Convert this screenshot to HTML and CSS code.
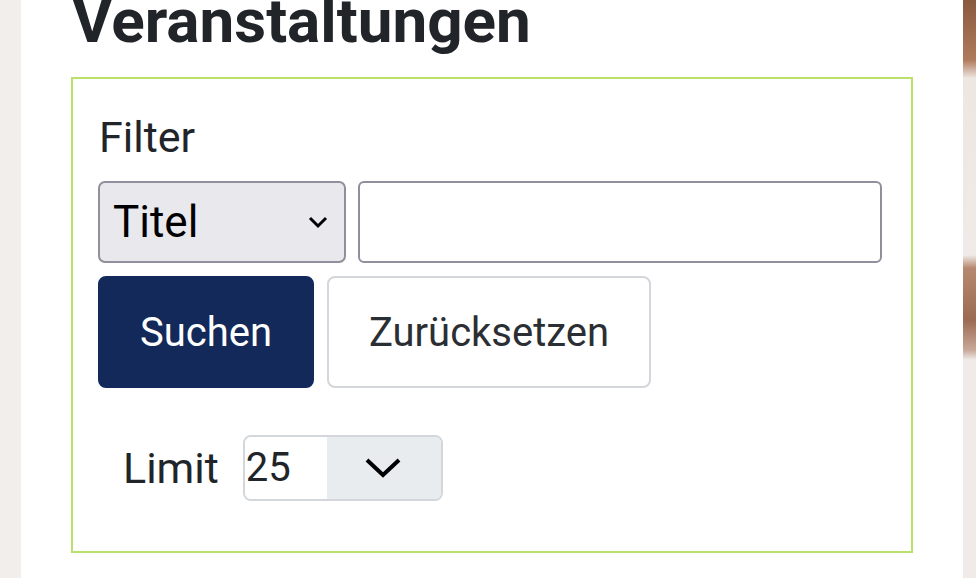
FILE: index.html
```html
<!DOCTYPE html>
<html lang="de">
<head>
  <meta charset="UTF-8">
  <title>Veranstaltungen</title>
  <link rel="stylesheet" href="styles.css">
</head>
<body>
  <div class="page">
    <div class="side-left"></div>
    <main class="content">
      <h1>Veranstaltungen</h1>

      <form class="filter-box">
        <div class="filter-label">Filter</div>
        <div class="filter-row">
          <div class="select-field">
            <span>Titel</span>
            <svg width="20" height="14" viewBox="0 0 20 14">
              <path d="M2 3 L10 11 L18 3" fill="none" stroke="#000" stroke-width="3"/>
            </svg>
          </div>
          <input class="text-field" type="text">
        </div>
        <div class="button-row">
          <button type="button" class="btn btn-primary">Suchen</button>
          <button type="button" class="btn btn-light">Zurücksetzen</button>
        </div>
        <div class="limit-row">
          <span class="limit-label">Limit</span>
          <div class="limit-select">
            <span class="limit-value">25</span>
            <span class="limit-toggle">
              <svg width="36" height="20" viewBox="0 0 36 20">
                <path d="M2 2 L18 17 L34 2" fill="none" stroke="#000" stroke-width="4"/>
              </svg>
            </span>
          </div>
        </div>
      </form>
    </main>
    <div class="side-right"></div>
  </div>
</body>
</html>
```

FILE: styles.css
```css
body {
  margin: 0;
  background: #f1eeeb;
  font-family: Roboto, "Liberation Sans", Arial, sans-serif;
  color: #212529;
}

.page {
  display: flex;
  height: 578px;
  overflow: hidden;
}

.side-left {
  width: 21px;
  background: #f1eeeb;
}

.side-right {
  width: 13px;
  background: linear-gradient(to bottom,
    #8a5a3e 0px, #b07a5c 60px, #ede6e1 78px,
    #f0ebe8 255px, #b78870 268px, #9c6a52 320px, #c8a898 350px,
    #f0ebe8 360px, #f0ebe8 578px);
}

.content {
  flex: 1;
  background: #fff;
  padding-left: 50px;
  padding-right: 50px;
}

h1 {
  font-size: 62px;
  font-weight: 700;
  line-height: 62px;
  margin: -10px 0 25px 1px;
  color: #212529;
}

.filter-box {
  border: 2px solid #bbe16c;
  padding: 33px 29px 50px 25px;
}

.filter-label {
  font-size: 43px;
  line-height: 50px;
  margin-bottom: 19px;
  padding-left: 1px;
}

.filter-row {
  display: flex;
  gap: 12px;
}

.select-field {
  width: 248px;
  height: 82px;
  box-sizing: border-box;
  display: flex;
  align-items: center;
  justify-content: space-between;
  padding: 0 16px 0 13px;
  background: #e9e9ed;
  border: 2px solid #8f8f9d;
  border-radius: 7px;
  font-size: 44px;
  color: #000;
}

.text-field {
  flex: 1;
  height: 82px;
  box-sizing: border-box;
  border: 2px solid #8f8f9d;
  border-radius: 6px;
  background: #fff;
  margin: 0;
}

.button-row {
  display: flex;
  gap: 13px;
  margin-top: 13px;
}

.btn {
  height: 112px;
  font-family: Roboto, "Liberation Sans", Arial, sans-serif;
  font-size: 40px;
  border-radius: 8px;
  cursor: pointer;
  margin: 0;
}

.btn-primary {
  width: 216px;
  background: #13295a;
  border: 2px solid #13295a;
  color: #fff;
}

.btn-light {
  width: 324px;
  background: #fff;
  border: 2px solid #d3d6da;
  color: #2b2f33;
}

.limit-row {
  display: flex;
  align-items: center;
  gap: 24px;
  margin-top: 47px;
  padding-left: 25px;
}

.limit-label {
  font-size: 43px;
}

.limit-select {
  width: 200px;
  height: 66px;
  box-sizing: border-box;
  display: flex;
  border: 2px solid #d3d6da;
  border-radius: 8px;
  overflow: hidden;
}

.limit-value {
  width: 81px;
  font-size: 40px;
  line-height: 62px;
  padding-left: 1px;
  color: #212529;
  background: #fff;
}

.limit-toggle {
  flex: 1;
  background: #e9ecef;
  display: flex;
  align-items: center;
  justify-content: center;
  padding-right: 2px;
}
```
